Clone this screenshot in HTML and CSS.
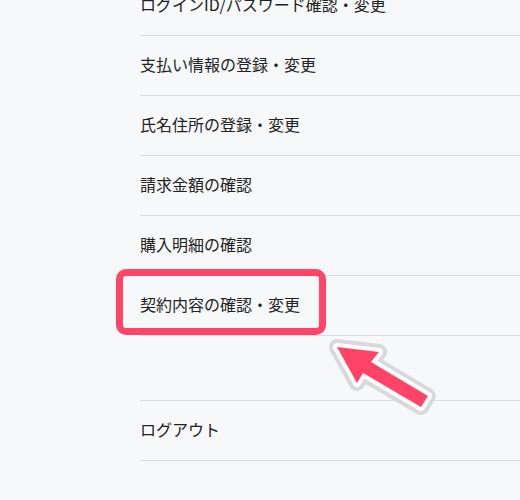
FILE: index.html
```html
<!DOCTYPE html>
<html lang="ja">
<head>
    <meta charset="UTF-8">
    <meta name="viewport" content="width=device-width, initial-scale=1.0">
    <title>アカウントメニュー</title>
    <link rel="stylesheet" href="styles.css">
</head>
<body>

<div class="page">
    <ul class="menu">
        <li class="menu-item">ログインID/パスワード確認・変更</li>
        <li class="menu-item">支払い情報の登録・変更</li>
        <li class="menu-item">氏名住所の登録・変更</li>
        <li class="menu-item">請求金額の確認</li>
        <li class="menu-item">購入明細の確認</li>
        <li class="menu-item highlight">契約内容の確認・変更</li>
    </ul>

    <ul class="menu logout">
        <li class="menu-item">ログアウト</li>
    </ul>

    <svg class="pointer" width="120" height="90" viewBox="320 330 120 90">
        <polygon class="outline" points="337,347 379,352 371,362 428,396 421,407 363,373 357,383"/>
        <polygon class="inner" points="337,347 379,352 371,362 428,396 421,407 363,373 357,383"/>
        <polygon class="fill" points="337,347 379,352 371,362 428,396 421,407 363,373 357,383"/>
    </svg>
</div>

</body>
</html>
```

FILE: styles.css
```css
body {
    margin: 0;
    background-color: #f7f8fa;
    font-family: "Noto Sans CJK JP", "Noto Sans", sans-serif;
    color: #222;
}
.page {
    position: relative;
    height: 500px;
    overflow: hidden;
    padding-left: 140px;
}
.menu {
    list-style: none;
    margin: 0;
    padding: 0;
}
.menu:first-child {
    margin-top: -24px;
}
.menu-item {
    position: relative;
    box-sizing: border-box;
    height: 60px;
    padding-bottom: 4px;
    display: flex;
    align-items: center;
    font-size: 16px;
    border-bottom: 1px solid #dcdcdc;
}
.logout {
    margin-top: 64px;
    border-top: 1px solid #dcdcdc;
}
.highlight::after {
    content: "";
    position: absolute;
    left: -24px;
    top: -7px;
    width: 196px;
    height: 52px;
    border: 7px solid #ff4467;
    border-radius: 10px;
}
.pointer {
    position: absolute;
    left: 320px;
    top: 330px;
}
.pointer polygon {
    stroke-linejoin: round;
}
.pointer .outline {
    fill: #d9d9d9;
    stroke: #d9d9d9;
    stroke-width: 16px;
}
.pointer .inner {
    fill: #fff;
    stroke: #fff;
    stroke-width: 8px;
}
.pointer .fill {
    fill: #ff4467;
}
```
